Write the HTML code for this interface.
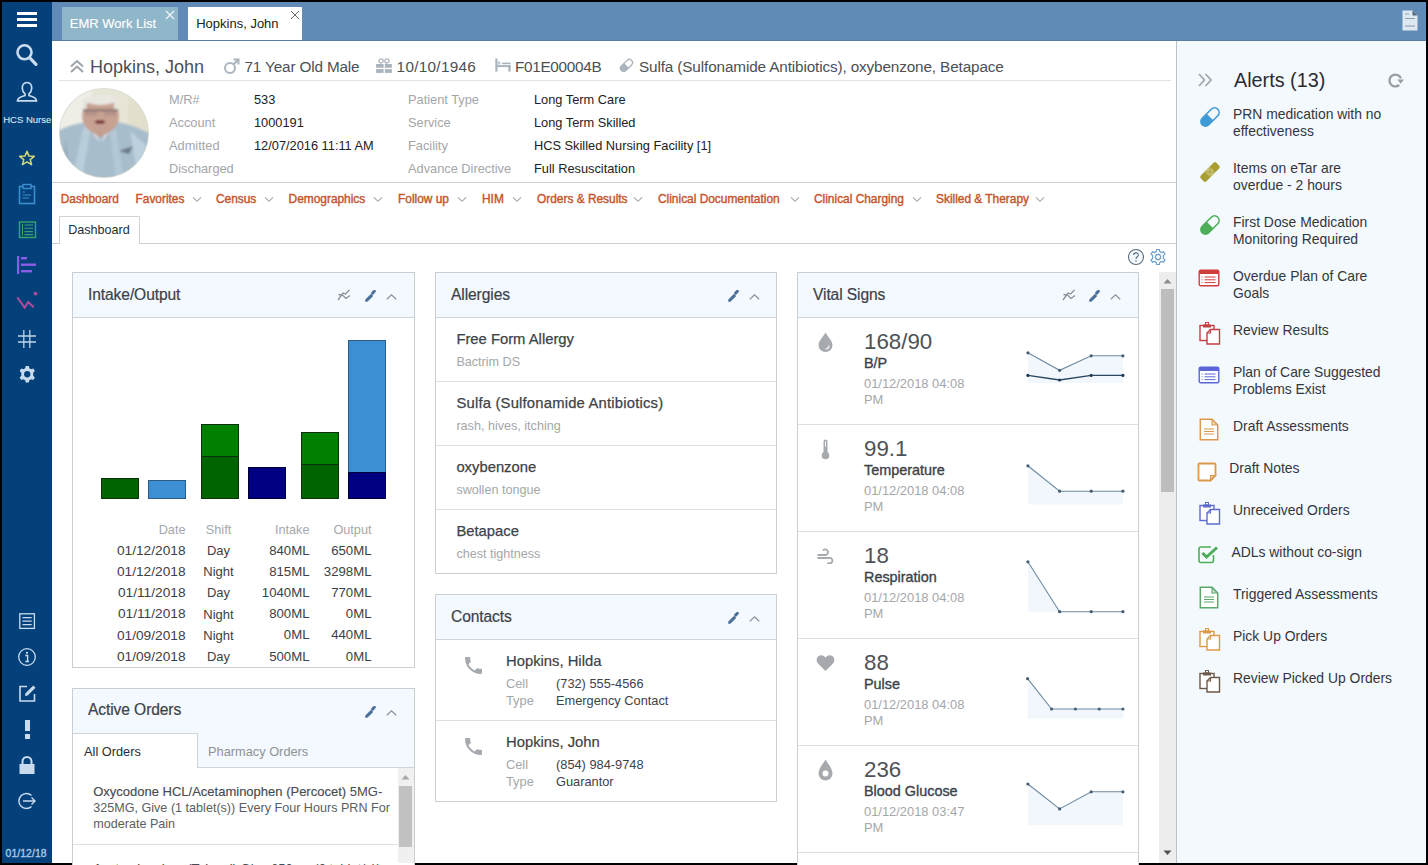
<!DOCTYPE html>
<html><head><meta charset="utf-8"><style>
*{box-sizing:border-box;margin:0;padding:0}
html,body{width:1428px;height:865px;overflow:hidden;background:#000;font-family:"Liberation Sans",sans-serif;position:relative}
.a{position:absolute}
.t{position:absolute;white-space:nowrap}
#app{position:absolute;left:2px;top:2px;width:1424px;height:861px;background:#fff}
#side{position:absolute;left:2px;top:2px;width:50px;height:861px;background:#04417a}
#topbar{position:absolute;left:52px;top:2px;width:1374px;height:39px;background:#5f8bb6}
#alerts{position:absolute;left:1176px;top:41px;width:250px;height:822px;background:#f4f9fe;border-left:1px solid #bcc1c8}
.lbl{color:#a3a6aa}
.val{color:#222}
.menu{color:#c4552c;-webkit-text-stroke:0.4px #c4552c}
.panel{position:absolute;border:1px solid #c9ced3;background:#fff;overflow:hidden}
.ph{position:absolute;left:0;top:0;right:0;height:45px;background:#f3f9fe;border-bottom:1px solid #cfd4d9}
.ptitle{color:#3d4248;-webkit-text-stroke:0.2px #3d4248}
</style></head><body>
<div id="app"></div><div id="side"></div><div id="topbar"></div>
<div class="a" style="left:62px;top:7px;width:116px;height:34px;background:#8fb6c9"></div>
<div class="a" style="left:188px;top:7px;width:114px;height:34px;background:#fff"></div>
<div class="t " style="left:69.8px;top:16.8px;font-size:13px;line-height:13px;color:#fff;-webkit-text-stroke:0.15px #fff">EMR Work List</div>
<div class="t " style="left:196.2px;top:16.8px;font-size:13px;line-height:13px;color:#222">Hopkins, John</div>
<svg class="a" style="left:165px;top:10px" width="10" height="10" viewBox="0 0 10 10"><path d="M1 1 L9 9 M9 1 L1 9" stroke="#f4f8fb" stroke-width="1.1"/></svg>
<svg class="a" style="left:289.5px;top:10px" width="10" height="10" viewBox="0 0 10 10"><path d="M1 1 L9 9 M9 1 L1 9" stroke="#6a6a6a" stroke-width="1"/></svg>
<div id="alerts"></div>
<div class="a" style="left:52px;top:40px;width:1374px;height:1px;background:#5a7d9d"></div>
<svg class="a" style="left:68px;top:57px" width="18" height="18" viewBox="0 0 18 18"><path d="M3 9.5 L9 4 L15 9.5 M3 15 L9 9.5 L15 15" fill="none" stroke="#9da3a9" stroke-width="2"/></svg>
<div class="t " style="left:90px;top:58.3px;font-size:18px;line-height:18px;color:#4b5056">Hopkins, John</div>
<svg class="a" style="left:223px;top:57px" width="18" height="18" viewBox="0 0 18 18"><circle cx="7" cy="11" r="5" fill="none" stroke="#a9b4be" stroke-width="2"/><path d="M10.5 7.5 L15.5 2.5 M10.5 2.5 H15.5 V7.5" fill="none" stroke="#a9b4be" stroke-width="2"/></svg>
<div class="t " style="left:244.5px;top:59.2px;font-size:15.3px;line-height:15.3px;color:#4b5056;letter-spacing:-0.15px">71 Year Old Male</div>
<svg class="a" style="left:375px;top:57px" width="18" height="17" viewBox="0 0 18 17"><circle cx="6.1" cy="3.9" r="2.1" fill="none" stroke="#aab4bd" stroke-width="1.3"/><circle cx="11.9" cy="3.9" r="2.1" fill="none" stroke="#aab4bd" stroke-width="1.3"/><rect x="1.1" y="7" width="15.8" height="3.8" fill="#aab4bd"/><rect x="1.1" y="12.1" width="15.8" height="3.8" fill="#aab4bd"/><rect x="8.6" y="6" width="1.2" height="10" fill="#fff"/></svg>
<div class="t " style="left:396.6px;top:59.2px;font-size:15.3px;line-height:15.3px;color:#4b5056;letter-spacing:0.3px">10/10/1946</div>
<svg class="a" style="left:494px;top:57px" width="18" height="16" viewBox="0 0 18 16"><rect x="1.3" y="1.4" width="2.2" height="13.2" fill="#aab4bd"/><rect x="3" y="8.1" width="13.6" height="2" fill="#aab4bd"/><rect x="14.3" y="8.1" width="2.3" height="6.5" fill="#aab4bd"/><rect x="8" y="5.6" width="8.6" height="1.6" fill="#aab4bd"/><rect x="3.5" y="4.5" width="3" height="3" fill="#c5ccd3"/></svg>
<div class="t " style="left:515px;top:59.2px;font-size:15.3px;line-height:15.3px;color:#4b5056;letter-spacing:-0.3px">F01E00004B</div>
<svg class="a" style="left:618px;top:56.5px" width="17" height="17" viewBox="0 0 17 17"><g transform="rotate(-45 8.5 8.5)"><path d="M8.5 5.3 H4.7 A3.2 3.2 0 0 0 4.7 11.7 H8.5 Z" fill="#aab4bd"/><rect x="1.3" y="5.3" width="14.4" height="6.4" rx="3.2" fill="none" stroke="#aab4bd" stroke-width="1.3"/></g></svg>
<div class="t " style="left:639px;top:59.2px;font-size:15.3px;line-height:15.3px;color:#4b5056;letter-spacing:-0.13px">Sulfa (Sulfonamide Antibiotics), oxybenzone, Betapace</div>
<div class="a" style="left:59px;top:80px;width:1112px;height:1px;background:#e1e4e7"></div>
<svg class="a" style="left:58px;top:87px" width="92" height="92" viewBox="0 0 92 92">
<defs><clipPath id="pc"><circle cx="46" cy="46" r="44.6"/></clipPath><filter id="bl" x="-20%" y="-20%" width="140%" height="140%"><feGaussianBlur stdDeviation="1.3"/></filter></defs>
<g clip-path="url(#pc)">
<rect x="0" y="0" width="92" height="92" fill="#e7e5d6"/>
<g filter="url(#bl)">
<rect x="-2" y="-2" width="36" height="55" fill="#efeee6"/>
<rect x="70" y="10" width="25" height="50" fill="#e2dfcc"/>
<path d="M-5 92 L-5 48 C4 40 16 37 30 35 L58 35 C72 37 85 42 97 50 L97 92 Z" fill="#a7bdcc"/>
<path d="M26 38 L14 92 L24 92 L33 40 Z" fill="#b9cedb"/>
<path d="M8 50 L4 92 L12 92 Z" fill="#93abbd"/>
<path d="M52 44 L58 92 L66 92 L58 42 Z" fill="#b3c8d6"/>
<path d="M72 44 L90 60 L90 92 L80 92 Z" fill="#bcd0dd"/>
<path d="M61 64 L75 59 L71 67 Z" fill="#45505a" opacity="0.6"/>
<rect x="35" y="40" width="15" height="10" fill="#c29a8b"/>
<path d="M31 42 L42 56 L36 40 Z" fill="#cfe0ea"/>
<path d="M54 42 L43 56 L49 40 Z" fill="#cfe0ea"/>
<ellipse cx="42.5" cy="29" rx="18.5" ry="18.5" fill="#c7a293"/>
<ellipse cx="42.5" cy="44" rx="9" ry="4" fill="#c59f90"/>
<ellipse cx="42.5" cy="13" rx="15" ry="5" fill="#e9e7e1"/>
<rect x="24.5" y="12" width="4" height="10" fill="#e6e4dc"/>
<rect x="56" y="12" width="4" height="10" fill="#e6e4dc"/>
<rect x="25" y="22.5" width="35" height="1.8" fill="#6a6062" opacity="0.8"/>
<rect x="27" y="24" width="12" height="5" fill="#a78685" opacity="0.55"/>
<rect x="46" y="24" width="12" height="5" fill="#a78685" opacity="0.55"/>
<ellipse cx="42" cy="35" rx="5.2" ry="2" fill="#7e3838"/>
</g></g>
<circle cx="46" cy="46" r="44.6" fill="none" stroke="#d8d8d0" stroke-width="0.8"/>
</svg>
<div class="t lbl" style="left:169px;top:94.0px;font-size:12.8px;line-height:12.8px;">M/R#</div>
<div class="t val" style="left:254px;top:94.0px;font-size:12.8px;line-height:12.8px;">533</div>
<div class="t lbl" style="left:408px;top:94.0px;font-size:12.8px;line-height:12.8px;">Patient Type</div>
<div class="t val" style="left:534px;top:94.0px;font-size:12.8px;line-height:12.8px;">Long Term Care</div>
<div class="t lbl" style="left:169px;top:117.0px;font-size:12.8px;line-height:12.8px;">Account</div>
<div class="t val" style="left:254px;top:117.0px;font-size:12.8px;line-height:12.8px;">1000191</div>
<div class="t lbl" style="left:408px;top:117.0px;font-size:12.8px;line-height:12.8px;">Service</div>
<div class="t val" style="left:534px;top:117.0px;font-size:12.8px;line-height:12.8px;">Long Term Skilled</div>
<div class="t lbl" style="left:169px;top:140.0px;font-size:12.8px;line-height:12.8px;">Admitted</div>
<div class="t val" style="left:254px;top:140.0px;font-size:12.8px;line-height:12.8px;">12/07/2016 11:11 AM</div>
<div class="t lbl" style="left:408px;top:140.0px;font-size:12.8px;line-height:12.8px;">Facility</div>
<div class="t val" style="left:534px;top:140.0px;font-size:12.8px;line-height:12.8px;">HCS Skilled Nursing Facility [1]</div>
<div class="t lbl" style="left:169px;top:163.0px;font-size:12.8px;line-height:12.8px;">Discharged</div>
<div class="t lbl" style="left:408px;top:163.0px;font-size:12.8px;line-height:12.8px;">Advance Directive</div>
<div class="t val" style="left:534px;top:163.0px;font-size:12.8px;line-height:12.8px;">Full Resuscitation</div>
<div class="a" style="left:52px;top:182px;width:1124px;height:1px;background:#c9ced3"></div>
<div class="t menu" style="left:60.7px;top:193.5px;font-size:11.9px;line-height:11.9px;">Dashboard</div>
<div class="t menu" style="left:135.5px;top:193.5px;font-size:11.9px;line-height:11.9px;">Favorites</div>
<svg class="a" style="left:191.6px;top:195px" width="10" height="8" viewBox="0 0 10 8"><path d="M1 2.3 L5 6.3 L9 2.3" fill="none" stroke="#a6aaae" stroke-width="1.15"/></svg>
<div class="t menu" style="left:216px;top:193.5px;font-size:11.9px;line-height:11.9px;">Census</div>
<svg class="a" style="left:263.5px;top:195px" width="10" height="8" viewBox="0 0 10 8"><path d="M1 2.3 L5 6.3 L9 2.3" fill="none" stroke="#a6aaae" stroke-width="1.15"/></svg>
<div class="t menu" style="left:288.6px;top:193.5px;font-size:11.9px;line-height:11.9px;">Demographics</div>
<svg class="a" style="left:373.0px;top:195px" width="10" height="8" viewBox="0 0 10 8"><path d="M1 2.3 L5 6.3 L9 2.3" fill="none" stroke="#a6aaae" stroke-width="1.15"/></svg>
<div class="t menu" style="left:398px;top:193.5px;font-size:11.9px;line-height:11.9px;">Follow up</div>
<svg class="a" style="left:457.0px;top:195px" width="10" height="8" viewBox="0 0 10 8"><path d="M1 2.3 L5 6.3 L9 2.3" fill="none" stroke="#a6aaae" stroke-width="1.15"/></svg>
<div class="t menu" style="left:482px;top:193.5px;font-size:11.9px;line-height:11.9px;">HIM</div>
<svg class="a" style="left:512.0px;top:195px" width="10" height="8" viewBox="0 0 10 8"><path d="M1 2.3 L5 6.3 L9 2.3" fill="none" stroke="#a6aaae" stroke-width="1.15"/></svg>
<div class="t menu" style="left:537px;top:193.5px;font-size:11.9px;line-height:11.9px;">Orders &amp; Results</div>
<svg class="a" style="left:633.0px;top:195px" width="10" height="8" viewBox="0 0 10 8"><path d="M1 2.3 L5 6.3 L9 2.3" fill="none" stroke="#a6aaae" stroke-width="1.15"/></svg>
<div class="t menu" style="left:658px;top:193.5px;font-size:11.9px;line-height:11.9px;">Clinical Documentation</div>
<svg class="a" style="left:789.5px;top:195px" width="10" height="8" viewBox="0 0 10 8"><path d="M1 2.3 L5 6.3 L9 2.3" fill="none" stroke="#a6aaae" stroke-width="1.15"/></svg>
<div class="t menu" style="left:814px;top:193.5px;font-size:11.9px;line-height:11.9px;">Clinical Charging</div>
<svg class="a" style="left:912.0px;top:195px" width="10" height="8" viewBox="0 0 10 8"><path d="M1 2.3 L5 6.3 L9 2.3" fill="none" stroke="#a6aaae" stroke-width="1.15"/></svg>
<div class="t menu" style="left:936px;top:193.5px;font-size:11.9px;line-height:11.9px;">Skilled &amp; Therapy</div>
<svg class="a" style="left:1035.0px;top:195px" width="10" height="8" viewBox="0 0 10 8"><path d="M1 2.3 L5 6.3 L9 2.3" fill="none" stroke="#a6aaae" stroke-width="1.15"/></svg>
<div class="a" style="left:52px;top:243px;width:1124px;height:1px;background:#c9ced3"></div>
<div class="a" style="left:59px;top:216px;width:81px;height:28px;background:#fff;border:1px solid #cfd4d9;border-bottom:none"></div>
<div class="t " style="left:68.2px;top:223.9px;font-size:12.6px;line-height:12.6px;color:#2a2d30">Dashboard</div>
<svg class="a" style="left:1127px;top:248px" width="18" height="18" viewBox="0 0 18 18"><circle cx="9" cy="9" r="7.5" fill="#f4f9fd" stroke="#5a6b7a" stroke-width="1.1"/><path d="M6.6 7 C6.6 4.2 11.4 4.2 11.4 7 C11.4 8.8 9 8.8 9 11" fill="none" stroke="#5a6b7a" stroke-width="1.1"/><circle cx="9" cy="13" r="0.8" fill="#5a6b7a"/></svg>
<svg class="a" style="left:1149px;top:248px" width="18" height="18" viewBox="0 0 18 18"><path d="M7.6 1.5 H10.4 L10.8 3.6 L12.6 4.6 L14.6 3.8 L16 6.2 L14.4 7.6 V10.4 L16 11.8 L14.6 14.2 L12.6 13.4 L10.8 14.4 L10.4 16.5 H7.6 L7.2 14.4 L5.4 13.4 L3.4 14.2 L2 11.8 L3.6 10.4 V7.6 L2 6.2 L3.4 3.8 L5.4 4.6 L7.2 3.6 Z" fill="#f4f9fd" stroke="#6a9cc8" stroke-width="1.1"/><circle cx="9" cy="9" r="2.6" fill="none" stroke="#6a9cc8" stroke-width="1.1"/></svg>
<div class="panel" style="left:72px;top:272px;width:343px;height:396px"><div class="ph"></div></div>
<div class="t ptitle" style="left:88px;top:287.1px;font-size:15.6px;line-height:15.6px;letter-spacing:-0.1px">Intake/Output</div>
<svg class="a" style="left:337px;top:289px" width="14" height="12" viewBox="0 0 14 12"><path d="M1 11 L6 4 L8.5 5 L12.5 1 M1.5 5.5 L5.5 6 L9 9.5 L13 6.5" fill="none" stroke="#8a9199" stroke-width="1.3"/></svg>
<svg class="a" style="left:364px;top:289.5px" width="13" height="13" viewBox="0 0 13 13"><path d="M1.2 11.8 L1.3 9.6 L7.1 3.8 L9.2 5.9 L3.4 11.7 Z" fill="#4b7099"/><path d="M8.6 3.1 L10.4 1.3" stroke="#4b7099" stroke-width="2.9" stroke-linecap="round"/></svg>
<svg class="a" style="left:386px;top:294px" width="11" height="6" viewBox="0 0 11 6"><path d="M0.8 5.2 L5.5 0.9 L10.2 5.2" fill="none" stroke="#8a9199" stroke-width="1.2"/></svg>
<div class="a" style="left:101px;top:478px;width:38px;height:21px;background:#006400;border:1px solid #0d2f0d"></div>
<div class="a" style="left:148px;top:480px;width:38px;height:19px;background:#3d8fd3;border:1px solid #2c5b86"></div>
<div class="a" style="left:201px;top:424px;width:38px;height:33px;background:#008000;border:1px solid #0d2f0d"></div>
<div class="a" style="left:201px;top:456px;width:38px;height:43px;background:#006400;border:1px solid #0d2f0d"></div>
<div class="a" style="left:248px;top:467px;width:38px;height:32px;background:#000080;border:1px solid #00003a"></div>
<div class="a" style="left:301px;top:432px;width:38px;height:33px;background:#008000;border:1px solid #0d2f0d"></div>
<div class="a" style="left:301px;top:464px;width:38px;height:35px;background:#006400;border:1px solid #0d2f0d"></div>
<div class="a" style="left:348px;top:340px;width:38px;height:133px;background:#3d8fd3;border:1px solid #2c5b86"></div>
<div class="a" style="left:348px;top:472px;width:38px;height:27px;background:#000080;border:1px solid #00003a"></div>
<div class="t " style="right:1242.5px;top:523.8px;font-size:12.7px;line-height:12.7px;color:#a5a8ac">Date</div>
<div class="t " style="left:118.5px;width:200px;text-align:center;top:523.8px;font-size:12.7px;line-height:12.7px;color:#a5a8ac">Shift</div>
<div class="t " style="right:1118.5px;top:523.8px;font-size:12.7px;line-height:12.7px;color:#a5a8ac">Intake</div>
<div class="t " style="right:1056.5px;top:523.8px;font-size:12.7px;line-height:12.7px;color:#a5a8ac">Output</div>
<div class="t " style="right:1242.5px;top:544.1px;font-size:13.7px;line-height:13.7px;color:#3c4146">01/12/2018</div>
<div class="t " style="left:118.5px;width:200px;text-align:center;top:544.2px;font-size:13.0px;line-height:13.0px;color:#3c4146">Day</div>
<div class="t " style="right:1118.5px;top:544.0px;font-size:13.2px;line-height:13.2px;color:#3c4146">840ML</div>
<div class="t " style="right:1056.5px;top:544.0px;font-size:13.2px;line-height:13.2px;color:#3c4146">650ML</div>
<div class="t " style="right:1242.5px;top:565.2px;font-size:13.7px;line-height:13.7px;color:#3c4146">01/12/2018</div>
<div class="t " style="left:118.5px;width:200px;text-align:center;top:565.3px;font-size:13.0px;line-height:13.0px;color:#3c4146">Night</div>
<div class="t " style="right:1118.5px;top:565.1px;font-size:13.2px;line-height:13.2px;color:#3c4146">815ML</div>
<div class="t " style="right:1056.5px;top:565.1px;font-size:13.2px;line-height:13.2px;color:#3c4146">3298ML</div>
<div class="t " style="right:1242.5px;top:586.3px;font-size:13.7px;line-height:13.7px;color:#3c4146">01/11/2018</div>
<div class="t " style="left:118.5px;width:200px;text-align:center;top:586.4px;font-size:13.0px;line-height:13.0px;color:#3c4146">Day</div>
<div class="t " style="right:1118.5px;top:586.2px;font-size:13.2px;line-height:13.2px;color:#3c4146">1040ML</div>
<div class="t " style="right:1056.5px;top:586.2px;font-size:13.2px;line-height:13.2px;color:#3c4146">770ML</div>
<div class="t " style="right:1242.5px;top:607.4px;font-size:13.7px;line-height:13.7px;color:#3c4146">01/11/2018</div>
<div class="t " style="left:118.5px;width:200px;text-align:center;top:607.5px;font-size:13.0px;line-height:13.0px;color:#3c4146">Night</div>
<div class="t " style="right:1118.5px;top:607.3px;font-size:13.2px;line-height:13.2px;color:#3c4146">800ML</div>
<div class="t " style="right:1056.5px;top:607.3px;font-size:13.2px;line-height:13.2px;color:#3c4146">0ML</div>
<div class="t " style="right:1242.5px;top:628.5px;font-size:13.7px;line-height:13.7px;color:#3c4146">01/09/2018</div>
<div class="t " style="left:118.5px;width:200px;text-align:center;top:628.6px;font-size:13.0px;line-height:13.0px;color:#3c4146">Night</div>
<div class="t " style="right:1118.5px;top:628.4px;font-size:13.2px;line-height:13.2px;color:#3c4146">0ML</div>
<div class="t " style="right:1056.5px;top:628.4px;font-size:13.2px;line-height:13.2px;color:#3c4146">440ML</div>
<div class="t " style="right:1242.5px;top:649.6px;font-size:13.7px;line-height:13.7px;color:#3c4146">01/09/2018</div>
<div class="t " style="left:118.5px;width:200px;text-align:center;top:649.7px;font-size:13.0px;line-height:13.0px;color:#3c4146">Day</div>
<div class="t " style="right:1118.5px;top:649.5px;font-size:13.2px;line-height:13.2px;color:#3c4146">500ML</div>
<div class="t " style="right:1056.5px;top:649.5px;font-size:13.2px;line-height:13.2px;color:#3c4146">0ML</div>
<div class="panel" style="left:72px;top:688px;width:343px;height:200px"><div class="ph"></div></div>
<div class="t ptitle" style="left:88px;top:702.1px;font-size:15.6px;line-height:15.6px;letter-spacing:-0.1px">Active Orders</div>
<svg class="a" style="left:364px;top:705.5px" width="13" height="13" viewBox="0 0 13 13"><path d="M1.2 11.8 L1.3 9.6 L7.1 3.8 L9.2 5.9 L3.4 11.7 Z" fill="#4b7099"/><path d="M8.6 3.1 L10.4 1.3" stroke="#4b7099" stroke-width="2.9" stroke-linecap="round"/></svg>
<svg class="a" style="left:386px;top:710px" width="11" height="6" viewBox="0 0 11 6"><path d="M0.8 5.2 L5.5 0.9 L10.2 5.2" fill="none" stroke="#8a9199" stroke-width="1.2"/></svg>
<div class="a" style="left:197px;top:733px;width:217px;height:35px;background:#f3f9fe;border-left:1px solid #cfd4d9;border-bottom:1px solid #cfd4d9"></div>
<div class="t " style="left:84px;top:745.6px;font-size:12.8px;line-height:12.8px;color:#2a2d30">All Orders</div>
<div class="t " style="left:208px;top:745.6px;font-size:12.8px;line-height:12.8px;color:#8e9296">Pharmacy Orders</div>
<div class="a" style="left:398px;top:768px;width:16px;height:95px;background:#f0f0f0"></div>
<div class="a" style="left:399px;top:786px;width:13px;height:61px;background:#c1c1c1"></div>
<svg class="a" style="left:401px;top:774px" width="9" height="6" viewBox="0 0 9 6"><path d="M0.5 5.5 L4.5 1 L8.5 5.5 Z" fill="#a8a8a8"/></svg>
<div class="t " style="left:93.2px;top:784.6px;font-size:13px;line-height:13px;color:#474b50"><span style="-webkit-text-stroke:0.15px #474b50">Oxycodone HCL/Acetaminophen (Percocet)</span> 5MG-</div>
<div class="t " style="left:93.2px;top:801.7px;font-size:12.6px;line-height:12.6px;color:#5a5e63">325MG, Give (1 tablet(s)) Every Four Hours PRN For</div>
<div class="t " style="left:93.2px;top:818.4px;font-size:12.6px;line-height:12.6px;color:#5a5e63">moderate Pain</div>
<div class="a" style="left:73px;top:844px;width:325px;height:1px;background:#dde1e4"></div>
<div class="t " style="left:93.2px;top:861.8px;font-size:13px;line-height:13px;color:#474b50"><span style="-webkit-text-stroke:0.15px #474b50">Acetaminophen (Tylenol)</span> Give 650mg (2 tablet(s))</div>
<div class="panel" style="left:435px;top:272px;width:342px;height:302px"><div class="ph"></div></div>
<div class="t ptitle" style="left:451px;top:287.1px;font-size:15.6px;line-height:15.6px;letter-spacing:-0.1px">Allergies</div>
<svg class="a" style="left:726.5px;top:289.5px" width="13" height="13" viewBox="0 0 13 13"><path d="M1.2 11.8 L1.3 9.6 L7.1 3.8 L9.2 5.9 L3.4 11.7 Z" fill="#4b7099"/><path d="M8.6 3.1 L10.4 1.3" stroke="#4b7099" stroke-width="2.9" stroke-linecap="round"/></svg>
<svg class="a" style="left:748.5px;top:294px" width="11" height="6" viewBox="0 0 11 6"><path d="M0.8 5.2 L5.5 0.9 L10.2 5.2" fill="none" stroke="#8a9199" stroke-width="1.2"/></svg>
<div class="t " style="left:456.4px;top:332.3px;font-size:14.8px;line-height:14.8px;color:#3d4248;-webkit-text-stroke:0.25px #3d4248">Free Form Allergy</div>
<div class="t " style="left:456.4px;top:355.6px;font-size:12.6px;line-height:12.6px;color:#a3a7ab">Bactrim DS</div>
<div class="t " style="left:456.4px;top:396.3px;font-size:14.8px;line-height:14.8px;color:#3d4248;-webkit-text-stroke:0.25px #3d4248;letter-spacing:0.2px">Sulfa (Sulfonamide Antibiotics)</div>
<div class="t " style="left:456.4px;top:419.6px;font-size:12.6px;line-height:12.6px;color:#a3a7ab">rash, hives, itching</div>
<div class="a" style="left:436px;top:381px;width:340px;height:1px;background:#dde1e4"></div>
<div class="t " style="left:456.4px;top:460.3px;font-size:14.8px;line-height:14.8px;color:#3d4248;-webkit-text-stroke:0.25px #3d4248">oxybenzone</div>
<div class="t " style="left:456.4px;top:483.6px;font-size:12.6px;line-height:12.6px;color:#a3a7ab">swollen tongue</div>
<div class="a" style="left:436px;top:445px;width:340px;height:1px;background:#dde1e4"></div>
<div class="t " style="left:456.4px;top:524.3px;font-size:14.8px;line-height:14.8px;color:#3d4248;-webkit-text-stroke:0.25px #3d4248">Betapace</div>
<div class="t " style="left:456.4px;top:547.6px;font-size:12.6px;line-height:12.6px;color:#a3a7ab">chest tightness</div>
<div class="a" style="left:436px;top:509px;width:340px;height:1px;background:#dde1e4"></div>
<div class="panel" style="left:435px;top:594px;width:342px;height:208px"><div class="ph"></div></div>
<div class="t ptitle" style="left:451px;top:608.6px;font-size:15.6px;line-height:15.6px;letter-spacing:-0.1px">Contacts</div>
<svg class="a" style="left:726.5px;top:611.5px" width="13" height="13" viewBox="0 0 13 13"><path d="M1.2 11.8 L1.3 9.6 L7.1 3.8 L9.2 5.9 L3.4 11.7 Z" fill="#4b7099"/><path d="M8.6 3.1 L10.4 1.3" stroke="#4b7099" stroke-width="2.9" stroke-linecap="round"/></svg>
<svg class="a" style="left:748.5px;top:616px" width="11" height="6" viewBox="0 0 11 6"><path d="M0.8 5.2 L5.5 0.9 L10.2 5.2" fill="none" stroke="#8a9199" stroke-width="1.2"/></svg>
<div class="a" style="left:436px;top:720px;width:340px;height:1px;background:#dde1e4"></div>
<svg class="a" style="left:465px;top:657px" width="17" height="17" viewBox="3 3 18 18"><path d="M6.62 10.79c1.44 2.83 3.76 5.14 6.59 6.59l2.2-2.2c.27-.27.67-.36 1.02-.24 1.12.37 2.33.57 3.57.57.55 0 1 .45 1 1V20c0 .55-.45 1-1 1-9.39 0-17-7.61-17-17 0-.55.45-1 1-1h3.5c.55 0 1 .45 1 1 0 1.25.2 2.45.57 3.57.11.35.03.74-.25 1.02l-2.2 2.2z" fill="#a6a9ad"/></svg>
<div class="t " style="left:506px;top:654.4px;font-size:14.8px;line-height:14.8px;color:#3d4248;-webkit-text-stroke:0.2px #3d4248">Hopkins, Hilda</div>
<div class="t " style="left:506px;top:678.1px;font-size:12.8px;line-height:12.8px;color:#a3a7ab">Cell</div>
<div class="t " style="left:556px;top:678.1px;font-size:12.8px;line-height:12.8px;color:#3d4248">(732) 555-4566</div>
<div class="t " style="left:506px;top:695.1px;font-size:12.8px;line-height:12.8px;color:#a3a7ab">Type</div>
<div class="t " style="left:556px;top:695.1px;font-size:12.8px;line-height:12.8px;color:#3d4248">Emergency Contact</div>
<svg class="a" style="left:465px;top:738px" width="17" height="17" viewBox="3 3 18 18"><path d="M6.62 10.79c1.44 2.83 3.76 5.14 6.59 6.59l2.2-2.2c.27-.27.67-.36 1.02-.24 1.12.37 2.33.57 3.57.57.55 0 1 .45 1 1V20c0 .55-.45 1-1 1-9.39 0-17-7.61-17-17 0-.55.45-1 1-1h3.5c.55 0 1 .45 1 1 0 1.25.2 2.45.57 3.57.11.35.03.74-.25 1.02l-2.2 2.2z" fill="#a6a9ad"/></svg>
<div class="t " style="left:506px;top:735.4px;font-size:14.8px;line-height:14.8px;color:#3d4248;-webkit-text-stroke:0.2px #3d4248">Hopkins, John</div>
<div class="t " style="left:506px;top:759.1px;font-size:12.8px;line-height:12.8px;color:#a3a7ab">Cell</div>
<div class="t " style="left:556px;top:759.1px;font-size:12.8px;line-height:12.8px;color:#3d4248">(854) 984-9748</div>
<div class="t " style="left:506px;top:776.1px;font-size:12.8px;line-height:12.8px;color:#a3a7ab">Type</div>
<div class="t " style="left:556px;top:776.1px;font-size:12.8px;line-height:12.8px;color:#3d4248">Guarantor</div>
<div class="panel" style="left:797px;top:272px;width:342px;height:600px"><div class="ph"></div></div>
<div class="t ptitle" style="left:813px;top:287.1px;font-size:15.6px;line-height:15.6px;letter-spacing:-0.1px">Vital Signs</div>
<svg class="a" style="left:1062px;top:289px" width="14" height="12" viewBox="0 0 14 12"><path d="M1 11 L6 4 L8.5 5 L12.5 1 M1.5 5.5 L5.5 6 L9 9.5 L13 6.5" fill="none" stroke="#8a9199" stroke-width="1.3"/></svg>
<svg class="a" style="left:1088px;top:289.5px" width="13" height="13" viewBox="0 0 13 13"><path d="M1.2 11.8 L1.3 9.6 L7.1 3.8 L9.2 5.9 L3.4 11.7 Z" fill="#4b7099"/><path d="M8.6 3.1 L10.4 1.3" stroke="#4b7099" stroke-width="2.9" stroke-linecap="round"/></svg>
<svg class="a" style="left:1110px;top:294px" width="11" height="6" viewBox="0 0 11 6"><path d="M0.8 5.2 L5.5 0.9 L10.2 5.2" fill="none" stroke="#8a9199" stroke-width="1.2"/></svg>
<div class="t " style="left:864px;top:330.6px;font-size:22.3px;line-height:22.3px;color:#4e5258">168/90</div>
<div class="t " style="left:864px;top:355.9px;font-size:14.4px;line-height:14.4px;color:#3d4248;-webkit-text-stroke:0.35px #3d4248">B/P</div>
<div class="t " style="left:864px;top:377.5px;font-size:12.9px;line-height:12.9px;color:#a3a7ab">01/12/2018 04:08</div>
<div class="t " style="left:864px;top:394.2px;font-size:12.9px;line-height:12.9px;color:#a3a7ab">PM</div>
<div class="a" style="left:798px;top:424px;width:340px;height:1px;background:#dde1e4"></div>
<div class="t " style="left:864px;top:437.6px;font-size:22.3px;line-height:22.3px;color:#4e5258">99.1</div>
<div class="t " style="left:864px;top:462.9px;font-size:14.4px;line-height:14.4px;color:#3d4248;-webkit-text-stroke:0.35px #3d4248">Temperature</div>
<div class="t " style="left:864px;top:484.5px;font-size:12.9px;line-height:12.9px;color:#a3a7ab">01/12/2018 04:08</div>
<div class="t " style="left:864px;top:501.2px;font-size:12.9px;line-height:12.9px;color:#a3a7ab">PM</div>
<div class="a" style="left:798px;top:531px;width:340px;height:1px;background:#dde1e4"></div>
<div class="t " style="left:864px;top:544.6px;font-size:22.3px;line-height:22.3px;color:#4e5258">18</div>
<div class="t " style="left:864px;top:569.9px;font-size:14.4px;line-height:14.4px;color:#3d4248;-webkit-text-stroke:0.35px #3d4248">Respiration</div>
<div class="t " style="left:864px;top:591.5px;font-size:12.9px;line-height:12.9px;color:#a3a7ab">01/12/2018 04:08</div>
<div class="t " style="left:864px;top:608.2px;font-size:12.9px;line-height:12.9px;color:#a3a7ab">PM</div>
<div class="a" style="left:798px;top:638px;width:340px;height:1px;background:#dde1e4"></div>
<div class="t " style="left:864px;top:651.6px;font-size:22.3px;line-height:22.3px;color:#4e5258">88</div>
<div class="t " style="left:864px;top:676.9px;font-size:14.4px;line-height:14.4px;color:#3d4248;-webkit-text-stroke:0.35px #3d4248">Pulse</div>
<div class="t " style="left:864px;top:698.5px;font-size:12.9px;line-height:12.9px;color:#a3a7ab">01/12/2018 04:08</div>
<div class="t " style="left:864px;top:715.2px;font-size:12.9px;line-height:12.9px;color:#a3a7ab">PM</div>
<div class="a" style="left:798px;top:745px;width:340px;height:1px;background:#dde1e4"></div>
<div class="t " style="left:864px;top:758.6px;font-size:22.3px;line-height:22.3px;color:#4e5258">236</div>
<div class="t " style="left:864px;top:783.9px;font-size:14.4px;line-height:14.4px;color:#3d4248;-webkit-text-stroke:0.35px #3d4248">Blood Glucose</div>
<div class="t " style="left:864px;top:805.5px;font-size:12.9px;line-height:12.9px;color:#a3a7ab">01/12/2018 03:47</div>
<div class="t " style="left:864px;top:822.2px;font-size:12.9px;line-height:12.9px;color:#a3a7ab">PM</div>
<div class="a" style="left:798px;top:852px;width:340px;height:1px;background:#dde1e4"></div>
<div class="a" style="left:1159px;top:272px;width:17px;height:591px;background:#ededed"></div>
<div class="a" style="left:1161px;top:289px;width:13px;height:203px;background:#bdbdbd"></div>
<svg class="a" style="left:1163px;top:278px" width="9" height="6" viewBox="0 0 9 6"><path d="M0.5 5.5 L4.5 1 L8.5 5.5 Z" fill="#8a8a8a"/></svg>
<svg class="a" style="left:1163px;top:850px" width="9" height="6" viewBox="0 0 9 6"><path d="M0.5 0.5 L4.5 5 L8.5 0.5 Z" fill="#505050"/></svg>
<svg class="a" style="left:817px;top:331px" width="17" height="22" viewBox="0 0 17 22"><path d="M8.5 1.5 C6 6 1.5 10 1.5 14 A7 7 0 0 0 15.5 14 C15.5 10 11 6 8.5 1.5 Z" fill="#a6a9ad"/><path d="M12 14.5 A3.8 3.8 0 0 1 8.5 18" fill="none" stroke="#fff" stroke-width="1.2"/></svg>
<svg class="a" style="left:819px;top:438px" width="13" height="22" viewBox="0 0 13 22"><rect x="4.5" y="1.5" width="4" height="15" rx="2" fill="#a6a9ad"/><circle cx="6.5" cy="17.5" r="3.8" fill="#a6a9ad"/><rect x="6" y="3.5" width="1" height="5" fill="#fff"/></svg>
<svg class="a" style="left:816px;top:548px" width="19" height="16" viewBox="0 0 19 16"><path d="M1.5 7 H9 A2.8 2.8 0 1 0 7 2.5" fill="none" stroke="#a6a9ad" stroke-width="1.8"/><path d="M1.5 10 H14.5 A2.8 2.8 0 1 1 11.5 14.5" fill="none" stroke="#a6a9ad" stroke-width="1.8"/></svg>
<svg class="a" style="left:816px;top:654px" width="19" height="18" viewBox="0 0 19 18"><path d="M9.5 17 L2 9.5 C-0.5 7 0.5 1.5 5 1.3 C7.2 1.2 8.6 2.5 9.5 3.8 C10.4 2.5 11.8 1.2 14 1.3 C18.5 1.5 19.5 7 17 9.5 Z" fill="#a6a9ad"/></svg>
<svg class="a" style="left:817px;top:758px" width="17" height="24" viewBox="0 0 17 24"><path fill-rule="evenodd" d="M8.5 1.5 C6 6 1.5 10.5 1.5 15.5 A7 7 0 0 0 15.5 15.5 C15.5 10.5 11 6 8.5 1.5 Z M8.5 12.6 A3 3 0 1 0 8.5 18.6 A3 3 0 1 0 8.5 12.6 Z" fill="#a6a9ad"/></svg>
<svg class="a" style="left:0;top:0" width="1428" height="865" viewBox="0 0 1428 865"><polygon points="1027.9,352.8 1059.6,370.3 1091.2,355.8 1122.9,355.8 1122.9,383.0 1027.9,383.0" fill="#f1f7fc"/><polyline points="1027.9,352.8 1059.6,370.3 1091.2,355.8 1122.9,355.8" fill="none" stroke="#6e8aa1" stroke-width="1.1"/><circle cx="1027.9" cy="352.8" r="1.6" fill="#475e72"/><circle cx="1059.6" cy="370.3" r="1.6" fill="#475e72"/><circle cx="1091.2" cy="355.8" r="1.6" fill="#475e72"/><circle cx="1122.9" cy="355.8" r="1.6" fill="#475e72"/><polyline points="1027.9,375.4 1059.6,380.0 1091.2,375.4 1122.9,375.4" fill="none" stroke="#2a4660" stroke-width="1.3"/><circle cx="1027.9" cy="375.4" r="1.6" fill="#1f3a55"/><circle cx="1059.6" cy="380" r="1.6" fill="#1f3a55"/><circle cx="1091.2" cy="375.4" r="1.6" fill="#1f3a55"/><circle cx="1122.9" cy="375.4" r="1.6" fill="#1f3a55"/><polygon points="1027.9,465.8 1059.6,491.2 1091.2,491.2 1122.9,491.2 1122.9,504.6 1027.9,504.6" fill="#f1f7fc"/><polyline points="1027.9,465.8 1059.6,491.2 1091.2,491.2 1122.9,491.2" fill="none" stroke="#6e8aa1" stroke-width="1.1"/><circle cx="1027.9" cy="465.8" r="1.6" fill="#475e72"/><circle cx="1059.6" cy="491.2" r="1.6" fill="#475e72"/><circle cx="1091.2" cy="491.2" r="1.6" fill="#475e72"/><circle cx="1122.9" cy="491.2" r="1.6" fill="#475e72"/><polygon points="1027.9,561.8 1059.6,611.7 1091.2,611.7 1122.9,611.7 1122.9,611.7 1027.9,611.7" fill="#f1f7fc"/><polyline points="1027.9,561.8 1059.6,611.7 1091.2,611.7 1122.9,611.7" fill="none" stroke="#6e8aa1" stroke-width="1.1"/><circle cx="1027.9" cy="561.8" r="1.6" fill="#475e72"/><circle cx="1059.6" cy="611.7" r="1.6" fill="#475e72"/><circle cx="1091.2" cy="611.7" r="1.6" fill="#475e72"/><circle cx="1122.9" cy="611.7" r="1.6" fill="#475e72"/><polygon points="1027.6,678.7 1051.6,709.0 1075.4,709.0 1099.2,709.0 1122.9,709.0 1122.9,718.6 1027.6,718.6" fill="#f1f7fc"/><polyline points="1027.6,678.7 1051.6,709.0 1075.4,709.0 1099.2,709.0 1122.9,709.0" fill="none" stroke="#6e8aa1" stroke-width="1.1"/><circle cx="1027.6" cy="678.7" r="1.6" fill="#475e72"/><circle cx="1051.6" cy="709" r="1.6" fill="#475e72"/><circle cx="1075.4" cy="709" r="1.6" fill="#475e72"/><circle cx="1099.2" cy="709" r="1.6" fill="#475e72"/><circle cx="1122.9" cy="709" r="1.6" fill="#475e72"/><polygon points="1027.9,784.0 1059.6,808.9 1091.2,791.8 1122.9,791.8 1122.9,825.0 1027.9,825.0" fill="#f1f7fc"/><polyline points="1027.9,784.0 1059.6,808.9 1091.2,791.8 1122.9,791.8" fill="none" stroke="#6e8aa1" stroke-width="1.1"/><circle cx="1027.9" cy="784" r="1.6" fill="#475e72"/><circle cx="1059.6" cy="808.9" r="1.6" fill="#475e72"/><circle cx="1091.2" cy="791.8" r="1.6" fill="#475e72"/><circle cx="1122.9" cy="791.8" r="1.6" fill="#475e72"/></svg>
<svg class="a" style="left:1197px;top:72px" width="17" height="16" viewBox="0 0 17 16"><path d="M2 2 L7.5 8 L2 14 M8.5 2 L14 8 L8.5 14" fill="none" stroke="#a2a6ab" stroke-width="1.8"/></svg>
<div class="t " style="left:1234px;top:70.6px;font-size:19.8px;line-height:19.8px;color:#2b2c36">Alerts (13)</div>
<svg class="a" style="left:1387px;top:71px" width="18" height="18" viewBox="0 0 18 18"><path d="M12.2 14 A5.9 5.9 0 1 1 13.9 7.4" fill="none" stroke="#9a9ea3" stroke-width="2.3"/><path d="M10.4 8.4 L17 8.4 L13.7 12.8 Z" fill="#9a9ea3"/></svg>
<svg class="a" style="left:1197.5px;top:104.5px" width="24" height="24" viewBox="0 0 24 24"><g transform="rotate(-45 12 12)"><path d="M12 7.4 H5.6 A4.6 4.6 0 0 0 5.6 16.6 H12 Z" fill="#3f9ad6"/><rect x="1" y="7.4" width="22" height="9.2" rx="4.6" fill="none" stroke="#3f9ad6" stroke-width="1.6"/></g></svg>
<div class="t " style="left:1233px;top:107.8px;font-size:13.9px;line-height:13.9px;color:#33363d">PRN medication with no</div>
<div class="t " style="left:1233px;top:124.7px;font-size:13.9px;line-height:13.9px;color:#33363d">effectiveness</div>
<svg class="a" style="left:1199px;top:161px" width="22" height="22" viewBox="0 0 22 22"><g transform="rotate(-45 11 11)"><rect x="0" y="7" width="22" height="8" rx="2" fill="#a89f30"/><rect x="7.5" y="7" width="7" height="8" fill="#c9c27a"/><path d="M8 8 L14 14 M14 8 L8 14" stroke="#a89f30" stroke-width="0.8"/></g></svg>
<div class="t " style="left:1233px;top:161.8px;font-size:13.9px;line-height:13.9px;color:#33363d">Items on eTar are</div>
<div class="t " style="left:1233px;top:178.7px;font-size:13.9px;line-height:13.9px;color:#33363d">overdue - 2 hours</div>
<svg class="a" style="left:1197.5px;top:212.5px" width="24" height="24" viewBox="0 0 24 24"><g transform="rotate(-45 12 12)"><path d="M12 7.4 H5.6 A4.6 4.6 0 0 0 5.6 16.6 H12 Z" fill="#4cae58"/><rect x="1" y="7.4" width="22" height="9.2" rx="4.6" fill="none" stroke="#4cae58" stroke-width="1.6"/></g></svg>
<div class="t " style="left:1233px;top:215.8px;font-size:13.9px;line-height:13.9px;color:#33363d">First Dose Medication</div>
<div class="t " style="left:1233px;top:232.7px;font-size:13.9px;line-height:13.9px;color:#33363d">Monitoring Required</div>
<svg class="a" style="left:1198px;top:269px" width="22" height="18" viewBox="0 0 22 18"><rect x="1.2" y="1.2" width="19.6" height="15.6" rx="1.5" fill="#fff" stroke="#cf3d3d" stroke-width="1.4"/><rect x="1.2" y="1.2" width="19.6" height="3.8" fill="#cf3d3d"/><path d="M6.5 8 H17.5 M6.5 10.8 H17.5 M6.5 13.6 H17.5" stroke="#cf3d3d" stroke-width="1"/><path d="M3.6 8 H4.6 M3.6 10.8 H4.6 M3.6 13.6 H4.6" stroke="#cf3d3d" stroke-width="1"/></svg>
<div class="t " style="left:1233px;top:269.8px;font-size:13.9px;line-height:13.9px;color:#33363d">Overdue Plan of Care</div>
<div class="t " style="left:1233px;top:286.7px;font-size:13.9px;line-height:13.9px;color:#33363d">Goals</div>
<svg class="a" style="left:1199px;top:322px" width="22" height="23" viewBox="0 0 22 23"><rect x="1" y="3.5" width="14" height="15" fill="#fff" stroke="#c43e44" stroke-width="1.4"/><rect x="4" y="2.5" width="8" height="3" fill="#c43e44"/><rect x="6.5" y="0.5" width="3" height="2.5" fill="none" stroke="#c43e44" stroke-width="1"/><path d="M11.5 7.5 H20.5 V22 H8 V11 Z" fill="#fff" stroke="#c43e44" stroke-width="1.4"/><path d="M8 11 H11.5 V7.5" fill="none" stroke="#c43e44" stroke-width="1.2"/></svg>
<div class="t " style="left:1233px;top:323.8px;font-size:13.9px;line-height:13.9px;color:#33363d">Review Results</div>
<svg class="a" style="left:1198px;top:366px" width="22" height="18" viewBox="0 0 22 18"><rect x="1.2" y="1.2" width="19.6" height="15.6" rx="1.5" fill="#fff" stroke="#5a66d6" stroke-width="1.4"/><rect x="1.2" y="1.2" width="19.6" height="3.8" fill="#5a66d6"/><path d="M6.5 8 H17.5 M6.5 10.8 H17.5 M6.5 13.6 H17.5" stroke="#5a66d6" stroke-width="1"/><path d="M3.6 8 H4.6 M3.6 10.8 H4.6 M3.6 13.6 H4.6" stroke="#5a66d6" stroke-width="1"/></svg>
<div class="t " style="left:1233px;top:365.8px;font-size:13.9px;line-height:13.9px;color:#33363d">Plan of Care Suggested</div>
<div class="t " style="left:1233px;top:382.7px;font-size:13.9px;line-height:13.9px;color:#33363d">Problems Exist</div>
<svg class="a" style="left:1199px;top:418px" width="20" height="23" viewBox="0 0 20 23"><path d="M1.3 1.3 H13 L18.7 7 V21.7 H1.3 Z" fill="#fff" stroke="#dc9a48" stroke-width="1.5"/><path d="M13 1.3 V7 H18.7" fill="#dc9a48" fill-opacity="0.35" stroke="#dc9a48" stroke-width="1.1"/><path d="M5 11 H15 M5 13.5 H15 M5 16 H15" stroke="#dc9a48" stroke-width="1.2"/></svg>
<div class="t " style="left:1233px;top:419.8px;font-size:13.9px;line-height:13.9px;color:#33363d">Draft Assessments</div>
<svg class="a" style="left:1197px;top:462px" width="20" height="20" viewBox="0 0 20 20"><path d="M1.5 2.5 Q1.5 1.5 2.5 1.5 H17.5 Q18.5 1.5 18.5 2.5 V13.5 L13.5 18.5 H2.5 Q1.5 18.5 1.5 17.5 Z" fill="#fff" stroke="#dc9a48" stroke-width="1.8"/><path d="M18.5 13.5 H13.5 V18.5 Z" fill="#dc9a48" fill-opacity="0.4" stroke="#dc9a48" stroke-width="1.2"/></svg>
<div class="t " style="left:1229.3px;top:461.8px;font-size:13.9px;line-height:13.9px;color:#33363d">Draft Notes</div>
<svg class="a" style="left:1199px;top:502px" width="22" height="23" viewBox="0 0 22 23"><rect x="1" y="3.5" width="14" height="15" fill="#fff" stroke="#5e6cd0" stroke-width="1.4"/><rect x="4" y="2.5" width="8" height="3" fill="#5e6cd0"/><rect x="6.5" y="0.5" width="3" height="2.5" fill="none" stroke="#5e6cd0" stroke-width="1"/><path d="M11.5 7.5 H20.5 V22 H8 V11 Z" fill="#fff" stroke="#5e6cd0" stroke-width="1.4"/><path d="M8 11 H11.5 V7.5" fill="none" stroke="#5e6cd0" stroke-width="1.2"/></svg>
<div class="t " style="left:1233px;top:503.8px;font-size:13.9px;line-height:13.9px;color:#33363d">Unreceived Orders</div>
<svg class="a" style="left:1198px;top:545px" width="22" height="19" viewBox="0 0 22 19"><path d="M15.5 10 V15.5 Q15.5 17.5 13.5 17.5 H3 Q1 17.5 1 15.5 V4 Q1 2 3 2 H13" fill="none" stroke="#4cae58" stroke-width="1.6"/><path d="M4.5 8 L8.5 12 L19 2.5" fill="none" stroke="#4cae58" stroke-width="3"/></svg>
<div class="t " style="left:1231.5px;top:545.8px;font-size:13.9px;line-height:13.9px;color:#33363d">ADLs without co-sign</div>
<svg class="a" style="left:1199px;top:586px" width="20" height="23" viewBox="0 0 20 23"><path d="M1.3 1.3 H13 L18.7 7 V21.7 H1.3 Z" fill="#fff" stroke="#5aa86a" stroke-width="1.5"/><path d="M13 1.3 V7 H18.7" fill="#5aa86a" fill-opacity="0.35" stroke="#5aa86a" stroke-width="1.1"/><path d="M5 11 H15 M5 13.5 H15 M5 16 H15" stroke="#5aa86a" stroke-width="1.2"/></svg>
<div class="t " style="left:1233px;top:587.8px;font-size:13.9px;line-height:13.9px;color:#33363d">Triggered Assessments</div>
<svg class="a" style="left:1199px;top:628px" width="22" height="23" viewBox="0 0 22 23"><rect x="1" y="3.5" width="14" height="15" fill="#fff" stroke="#dc9a48" stroke-width="1.4"/><rect x="4" y="2.5" width="8" height="3" fill="#dc9a48"/><rect x="6.5" y="0.5" width="3" height="2.5" fill="none" stroke="#dc9a48" stroke-width="1"/><path d="M11.5 7.5 H20.5 V22 H8 V11 Z" fill="#fff" stroke="#dc9a48" stroke-width="1.4"/><path d="M8 11 H11.5 V7.5" fill="none" stroke="#dc9a48" stroke-width="1.2"/></svg>
<div class="t " style="left:1233px;top:629.8px;font-size:13.9px;line-height:13.9px;color:#33363d">Pick Up Orders</div>
<svg class="a" style="left:1199px;top:670px" width="22" height="23" viewBox="0 0 22 23"><rect x="1" y="3.5" width="14" height="15" fill="#fff" stroke="#6e5848" stroke-width="1.4"/><rect x="4" y="2.5" width="8" height="3" fill="#6e5848"/><rect x="6.5" y="0.5" width="3" height="2.5" fill="none" stroke="#6e5848" stroke-width="1"/><path d="M11.5 7.5 H20.5 V22 H8 V11 Z" fill="#fff" stroke="#6e5848" stroke-width="1.4"/><path d="M8 11 H11.5 V7.5" fill="none" stroke="#6e5848" stroke-width="1.2"/></svg>
<div class="t " style="left:1233px;top:671.8px;font-size:13.9px;line-height:13.9px;color:#33363d">Review Picked Up Orders</div>
<svg class="a" style="left:1402px;top:10px" width="16" height="21" viewBox="0 0 16 21"><path d="M0.5 0.5 H10.5 L15.5 5.5 V20.5 H0.5 Z" fill="#dde8f2"/><path d="M10.5 0.5 V5.5 H15.5 Z" fill="#566a80"/><path d="M3 4 H7 M3 8.5 H13 M3 16 H13" stroke="#7a8a9a" stroke-width="0.8"/></svg>
<div class="a" style="left:17px;top:12px;width:20px;height:2.6px;background:#fff"></div><div class="a" style="left:17px;top:18px;width:20px;height:2.6px;background:#fff"></div><div class="a" style="left:17px;top:24px;width:20px;height:2.6px;background:#fff"></div>
<svg class="a" style="left:14px;top:42px" width="26" height="26" viewBox="0 0 26 26"><circle cx="10.5" cy="10.3" r="7" fill="none" stroke="#c9dcef" stroke-width="2.6"/><path d="M15.8 15.8 L22 22.3" stroke="#c9dcef" stroke-width="3.2" stroke-linecap="round"/></svg>
<svg class="a" style="left:15px;top:80px" width="24" height="24" viewBox="0 0 24 24"><path d="M12 2.5 C8.5 2.5 7 5.5 7.3 8.5 C7.6 11.5 9 13.3 10 14 V15.5 C6 16.5 2.5 17.8 2.5 20.8 H21.5 C21.5 17.8 18 16.5 14 15.5 V14 C15 13.3 16.4 11.5 16.7 8.5 C17 5.5 15.5 2.5 12 2.5 Z" fill="none" stroke="#c9dcef" stroke-width="1.7"/></svg>
<div class="t " style="left:3.2px;top:115.4px;font-size:9.5px;line-height:9.5px;color:#d6e4f2;-webkit-text-stroke:0.1px #d6e4f2">HCS Nurse</div>
<svg class="a" style="left:17px;top:148px" width="20" height="20" viewBox="0 0 20 20"><path d="M10 3.2 L12 8.1 L17.3 8.3 L13.2 11.6 L14.6 16.7 L10 13.8 L5.4 16.7 L6.8 11.6 L2.7 8.3 L8 8.1 Z" fill="none" stroke="#d4db78" stroke-width="1.5" stroke-linejoin="round"/></svg>
<svg class="a" style="left:18px;top:183px" width="18" height="22" viewBox="0 0 18 22"><rect x="1.5" y="3.5" width="15" height="17" fill="none" stroke="#3b8ed0" stroke-width="1.6"/><rect x="5" y="1.5" width="8" height="4" fill="#05427c" stroke="#3b8ed0" stroke-width="1.4"/><path d="M4.5 9 H7 M4.5 12 H13 M4.5 15 H11" stroke="#3b8ed0" stroke-width="1.2"/></svg>
<svg class="a" style="left:17px;top:220px" width="20" height="20" viewBox="0 0 20 20"><rect x="2.5" y="2" width="16" height="15.5" fill="none" stroke="#36a46c" stroke-width="1.4"/><path d="M5.5 4 V15.5" stroke="#36a46c" stroke-width="1"/><path d="M7.5 5 H16 M7.5 8.3 H16 M7.5 11.6 H16 M7.5 14.6 H16" stroke="#36a46c" stroke-width="1.1"/></svg>
<svg class="a" style="left:16px;top:255px" width="22" height="20" viewBox="0 0 22 20"><rect x="1" y="1" width="2.2" height="18" fill="#8c5ee6"/><rect x="5" y="2" width="6" height="2.4" fill="#8c5ee6"/><rect x="5" y="8.5" width="15" height="2.4" fill="#8c5ee6"/><rect x="5" y="15" width="11" height="2.4" fill="#8c5ee6"/></svg>
<svg class="a" style="left:16px;top:291px" width="23" height="19" viewBox="0 0 23 19"><path d="M1.3 6.2 L8.6 16.6 L12.2 11 L17.7 16.3" fill="none" stroke="#b24a9c" stroke-width="2"/><circle cx="19.5" cy="2.6" r="1.9" fill="#b24a9c"/></svg>
<svg class="a" style="left:17px;top:329px" width="20" height="20" viewBox="0 0 20 20"><path d="M6.8 1 V19 M12.8 1 V19 M1 7 H19 M1 13 H19" stroke="#bcd3ea" stroke-width="1.3"/></svg>
<svg class="a" style="left:17.8px;top:365.3px" width="18.5" height="18.5" viewBox="0 0 20 20"><path fill="#c9dcef" fill-rule="evenodd" d="M8.3 1 H11.7 L12.2 3.4 L14.2 4.5 L16.5 3.7 L18.2 6.6 L16.4 8.3 V11.7 L18.2 13.4 L16.5 16.3 L14.2 15.5 L12.2 16.6 L11.7 19 H8.3 L7.8 16.6 L5.8 15.5 L3.5 16.3 L1.8 13.4 L3.6 11.7 V8.3 L1.8 6.6 L3.5 3.7 L5.8 4.5 L7.8 3.4 Z M10 6.6 A3.4 3.4 0 1 0 10 13.4 A3.4 3.4 0 1 0 10 6.6 Z"/></svg>
<svg class="a" style="left:18px;top:612px" width="18" height="18" viewBox="0 0 18 18"><rect x="1.8" y="1.8" width="14.6" height="14.6" fill="none" stroke="#c9dcef" stroke-width="1.3"/><path d="M4.5 5.6 H13.7 M4.5 9.1 H13.7 M4.5 12.6 H13.7" stroke="#c9dcef" stroke-width="1.2"/></svg>
<svg class="a" style="left:17px;top:647px" width="20" height="20" viewBox="0 0 20 20"><circle cx="10" cy="10" r="8.3" fill="none" stroke="#c9dcef" stroke-width="1.3"/><circle cx="10" cy="5.8" r="1.1" fill="#c9dcef"/><path d="M8.3 8.5 H10.6 V14.5 M8.3 14.5 H12" fill="none" stroke="#c9dcef" stroke-width="1.4"/></svg>
<svg class="a" style="left:18px;top:684px" width="19" height="19" viewBox="0 0 19 19"><path d="M9 2.5 H2 V17 H16.5 V10" fill="none" stroke="#c9dcef" stroke-width="1.6"/><path d="M7 12 L7.5 9.3 L15.3 1.5 L17.5 3.7 L9.7 11.5 Z" fill="#c9dcef"/></svg>
<div class="a" style="left:24.5px;top:720px;width:5px;height:11px;background:#c9dcef"></div><div class="a" style="left:24.5px;top:734px;width:5px;height:4.5px;background:#c9dcef"></div>
<svg class="a" style="left:17px;top:755px" width="20" height="20" viewBox="0 0 20 20"><path d="M5.5 9 V6.5 A4.5 4.5 0 0 1 14.5 6.5 V9" fill="none" stroke="#c9dcef" stroke-width="2"/><rect x="2.5" y="9" width="15" height="10" fill="#c9dcef"/></svg>
<svg class="a" style="left:17px;top:791px" width="20" height="20" viewBox="0 0 20 20"><path d="M14.5 4.5 A7.5 7.5 0 1 0 14.5 15.5" fill="none" stroke="#c9dcef" stroke-width="1.4"/><path d="M6 10 H18 M14.5 6.5 L18 10 L14.5 13.5" fill="none" stroke="#c9dcef" stroke-width="1.4"/></svg>
<div class="t " style="left:5.5px;top:849.2px;font-size:10.4px;line-height:10.4px;color:#a6c8ea;-webkit-text-stroke:0.35px #a6c8ea;letter-spacing:0.1px">01/12/18</div>
</body></html>
